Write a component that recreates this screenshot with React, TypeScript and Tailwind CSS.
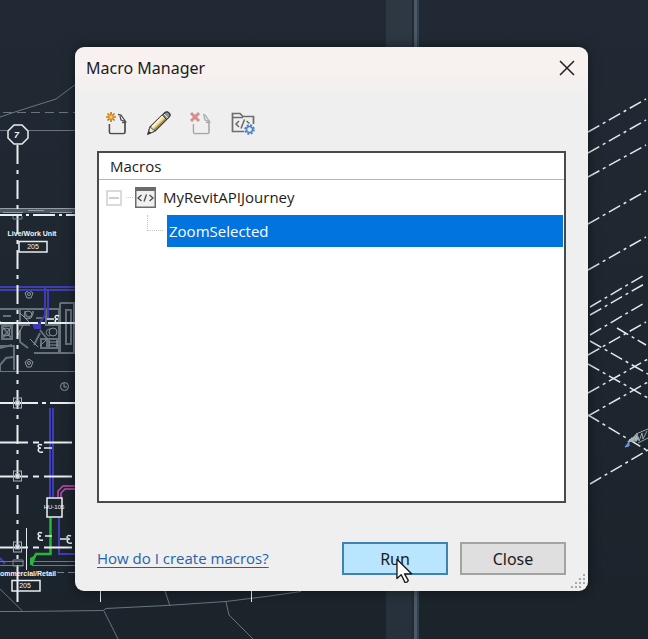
import type { ReactNode } from 'react';

const CAD_FONT = "[font-family:'Liberation_Sans',Arial,sans-serif]";

function GridMark({ y }: { y: number }) {
  return (
    <g stroke="#a9b3bb" fill="none">
      <rect x="13.5" y={y - 5} width="8" height="10" />
      <rect x="15.5" y={y - 2} width="4" height="4" fill="#dfe5e9" />
    </g>
  );
}

function Pentagon({ x, y }: { x: number; y: number }) {
  return (
    <g fill="none" stroke="#8b969f">
      <path d={`M${x} ${y - 4}l4 3-2 5h-4l-2-5z`} />
      <circle cx={x} cy={y} r="1.5" />
    </g>
  );
}

const isoLines: [number, number, number, number][] = [
  [588, 132, 646, 99],
  [588, 153, 646, 120],
  [588, 177, 646, 145],
  [588, 224, 646, 191],
  [588, 270, 646, 237],
  [590, 307, 646, 274],
  [590, 315, 646, 283],
  [590, 335, 646, 302],
  [588, 355, 646, 322],
  [588, 393, 648, 359],
  [588, 416, 648, 382],
  [590, 484, 648, 450],
  [617, 328, 646, 345],
  [590, 341, 648, 374],
  [588, 364, 648, 398],
  [588, 415, 648, 451],
];

function DrawingCanvas() {
  return (
    <svg className="absolute left-0 top-0" width="648" height="639" viewBox="0 0 648 639" aria-hidden="true">
      <rect x="386" y="0" width="26" height="300" fill="#2e3843" />
      <rect x="386" y="300" width="26" height="339" fill="#27313b" />
      <rect x="412" y="0" width="2" height="639" fill="#202b37" />
      <rect x="414" y="0" width="3" height="639" fill="#4b5866" />
      <rect x="417" y="0" width="2" height="639" fill="#323f4d" />

      {/* site contours */}
      <g fill="none" stroke="#69747d">
        <path d="M0 117l18-6 38-12 20-15" />
        <path d="M3 112.500h72" strokeDasharray="9 5" />
        <path d="M0 130.500h75" />
        <path d="M0 371.500h75" />
        <path d="M0 589l22 21.500M0 611.500h22l81-1 3-2 60-3 60-4 40-5 35-5" />
        <path d="M104 611l14 28M165 591l5 15M226 602l3 13 24 24" />
      </g>

      {/* walls */}
      <rect x="0" y="208" width="75" height="5" fill="#4d5962" />
      <path d="M0 208.500h75M3 212.500h20M28 210.500h16M50 212.500h22" stroke="#929da5" fill="none" />
      <g fill="none" stroke="#66727b" strokeWidth="2">
        <path d="M0 309h60M60 303h14v50H34M66 310h5v34h-5zM0 346h14v24M0 324h14M20 309v16h10M46 309v16h13M59 309v43M20 330v12l8 6M40 330l8 10M34 345l6-12M0 348l12-3M2 326l10 13M12 326L2 339M2 326h10v13H2z" />
        <path d="M49 339h8v9h-8zM41 339h6v9h-6zM0 371v-6l6-7 7-1M60 303v50M3 316h8M25 311c0 8 8 8 8 0M36 318h8" />
      </g>
      <g fill="none" stroke="#87929a">
        <path d="M0 321.500l6 3M49 342h9M49 345h9M20 313l9 9M50 329c-5 0-5 7 0 7M30 339l8 8M40 346l8-8M23 325l-6 12" />
        <circle cx="28" cy="315" r="4" />
        <circle cx="53" cy="332" r="4" />
        <circle cx="6" cy="332" r="4" />
        <circle cx="64.500" cy="386.500" r="4" />
        <path d="M64 383v4h3" />
      </g>
      <Pentagon x={29} y={294} />
      <Pentagon x={29} y={363} />

      {/* ducts and pipes */}
      <g fill="none" stroke="#3f3db5" strokeWidth="2">
        <path d="M0 287h75M0 290h75M45 287v28l-5 8M48 290v28" />
        <path d="M50 408v89M53 408v89M59 518v36h16" />
        <path d="M0 558l5 6" />
      </g>
      <path d="M32 323h9v6h-7z" fill="#3d3bbd" />
      <path d="M58 497v-6l5-5h12M61 497v-4l4-4h10" stroke="#c04fb2" fill="none" strokeWidth="1.500" />
      <path d="M50.500 518v36H36l-5 10" stroke="#22b83b" strokeWidth="2.500" fill="none" />
      <path d="M30 558l6-3-3 10h-3z" fill="#22b83b" />
      <path d="M32 561.500h43M32 565.500h43M0 561.500h24M0 565.500h24" stroke="#6f7b84" />
      <path d="M57 572.500h18" stroke="#78838c" strokeDasharray="7 4" />

      {/* grid lines */}
      <g fill="none" stroke="#e9eef1" strokeWidth="2">
        <path d="M17.500 145v430" strokeDasharray="19 6 4 6" />
        <path d="M0 215h75" strokeDasharray="22 4 3 4" />
        <path d="M0 323h75" strokeDasharray="38 3 4 3" />
        <path d="M0 403h75" strokeDasharray="38 4 4 4" />
        <path d="M0 442.500h75M0 476.500h75M0 547.500h75" strokeDasharray="28 5 6 5" />
        <path d="M17.500 575v27" />
      </g>
      <path d="M26.500 528v42M100.500 591v11M251.500 591v11" stroke="#e4eaee" />
      <GridMark y={403} />
      <GridMark y={476} />
      <GridMark y={547} />
      <path d="M13 560h10v6H13zM13 216v3h9v-3" fill="none" stroke="#7c8790" />

      {/* grid bubble */}
      <path d="M14 125h8l6 6v7l-6 6h-8l-6-6v-7z" fill="#212a33" stroke="#e8edf0" strokeWidth="1.500" />

      {/* equipment */}
      <rect x="47" y="498" width="15" height="19" fill="#1c242c" stroke="#eef2f4" strokeWidth="1.500" />
      <g stroke="#e8edf0" fill="none" strokeWidth="1.500">
        <path d="M44 448h8M45 536h7M60 539h7M47 319h7" />
        <path d="M42 445c-5-2-5 3-1 3-4 0-4 5 2 4M42 533c-5-2-5 3-1 3-4 0-4 5 2 4M71 536c-5-2-5 3-1 3-4 0-4 5 2 4M59 316c-5-2-5 3-1 3-4 0-4 5 2 4" />
      </g>
      <g fill="none" stroke="#e8edf0" strokeWidth="1.500">
        <rect x="19" y="241.500" width="28" height="10.500" />
        <rect x="12" y="580.500" width="28" height="10.500" />
      </g>
      <g fill="#f2f5f7" textAnchor="middle" className={`${CAD_FONT} font-bold`}>
        <text x="16.500" y="138" fontSize="9" fontStyle="italic">7</text>
        <text x="32" y="236" fontSize="7">Live/Work Unit</text>
        <text x="33" y="249" fontSize="7" fontWeight="400">205</text>
        <text x="54" y="509" fontSize="6" fontWeight="400">HU-105</text>
        <text x="25" y="588" fontSize="7" fontWeight="400">205</text>
        <text x="0" y="576" fontSize="7" textAnchor="start">ommercial/Retail</text>
      </g>

      {/* isometric view */}
      <g stroke="#e3e9ec" strokeWidth="1.500" strokeDasharray="13 4 3 4">
        {isoLines.map(([x1, y1, x2, y2]) => (
          <line key={`${x1}-${y1}-${y2}`} x1={x1} y1={y1} x2={x2} y2={y2} />
        ))}
      </g>
      <path d="M627 442l5-5 3 5zM632 438l4-4 3 4-3 4z" fill="#a7b5c1" />
      <path d="M625 447l4-5v4z" fill="#568bd6" stroke="#6f9ddd" />
      <path d="M634 440l3-7 2 8 3-8 1 6 4-8M636 434l12-5M638 443l10-5" stroke="#98a3ab" fill="none" />
    </svg>
  );
}

function NewIcon() {
  return (
    <svg width="24" height="24" viewBox="0 0 24 24" fill="none">
      <path d="M4.500 13v8q0 1.500 1.500 1.500h12.500q1.500 0 1.500-1.500V11.500h-3" stroke="#4d4d4d" strokeWidth="1.700" />
      <path d="M5.500 12.500h13.500v9h-13.500z" fill="#efefef" />
      <path d="M13 3.500l3 .5 4.500 6.500-4.500-1.500-1-4" stroke="#4d4d4d" fill="#f8f8f8" strokeWidth="1.300" />
      <path d="M6 1v10M1 6h10M2.500 2.500l7 7M9.500 2.500l-7 7" stroke="#c87519" strokeWidth="1.700" />
      <circle cx="6" cy="6" r="2.200" fill="#ffd24d" stroke="#d98622" />
    </svg>
  );
}

function PencilIcon() {
  return (
    <svg width="24" height="24" viewBox="0 0 24 24" fill="none">
      <path d="M1 23l2-7L18 1.500q2-1.500 4 .5t0 4L8 20z" fill="#e9d894" stroke="#383838" strokeWidth="1.400" />
      <path d="M5 16L17 4" stroke="#fff6cf" strokeWidth="2" />
      <path d="M7 19L20 6.500" stroke="#9c8752" strokeWidth="1.500" />
      <path d="M15.500 4l4 4.500 3-3q1-2-.5-3.500t-3.500-.5z" fill="#8c9197" stroke="#333" />
      <path d="M17 3l4 4" stroke="#e6e6e6" />
      <path d="M3 16l5 4-7 3z" fill="#eeeae0" stroke="#555" />
      <path d="M1 23l1-3 2 2z" fill="#222" />
    </svg>
  );
}

function DeleteIcon() {
  return (
    <svg width="24" height="24" viewBox="0 0 24 24" fill="none">
      <path d="M4.500 13v8q0 1.500 1.500 1.500h12.500q1.500 0 1.500-1.500V11.500h-3" stroke="#a5aaa7" strokeWidth="1.600" />
      <path d="M5.500 12.500h13.500v9h-13.500z" fill="#efefef" />
      <path d="M14 3.500l2 .5 4.500 6.500-4.500-1.500-1-4" stroke="#9caea5" fill="#f0f3f1" strokeWidth="1.300" />
      <path d="M2 2l8 8M10 2l-8 8" stroke="#d38e8e" strokeWidth="3" />
    </svg>
  );
}

function FolderIcon() {
  return (
    <svg width="24" height="24" viewBox="0 0 24 24" fill="none">
      <path d="M13 20.500H1.500v-18H9l3 3h10.500V13M1.500 6.500H12" stroke="#6d6d6d" strokeWidth="1.700" />
      <path d="M8 10l-3 3 3 3M13.500 8.500l-3.500 9M15.500 10l3 2.500" stroke="#666" strokeWidth="1.500" />
      <circle cx="18.500" cy="18.500" r="4.300" stroke="#4683c8" strokeWidth="2" strokeDasharray="2 1.380" />
      <circle cx="18.500" cy="18.500" r="3" fill="#efefef" stroke="#4683c8" strokeWidth="1.400" />
    </svg>
  );
}

function MacroIcon() {
  return (
    <svg width="21" height="21" viewBox="0 0 21 21" fill="none" className="shrink-0">
      <rect x="0.750" y="0.750" width="19.500" height="19.500" fill="#f0f0f0" stroke="#6b6b6b" strokeWidth="1.500" />
      <rect width="21" height="4" fill="#6b6b6b" />
      <path d="M6.500 8L3 11l3.500 3M14.500 8l3.500 3-3.500 3M11.500 7.500l-2.500 7" stroke="#4c4c4c" strokeWidth="1.300" />
    </svg>
  );
}

function ToolButton({ label, disabled, children }: { label: string; disabled?: boolean; children: ReactNode }) {
  return (
    <button type="button" aria-label={label} disabled={disabled} className="flex size-6 items-center justify-center">
      {children}
    </button>
  );
}

function Cursor() {
  return (
    <svg className="pointer-events-none absolute left-[52px] top-3.5" width="17" height="26" viewBox="0 0 18 27" aria-hidden="true">
      <path d="M1 1v20.500l4.500-4 4 8q2.500.5 3.500-2l-4-7h7.500z" fill="#fff" stroke="#161616" strokeWidth="1.400" strokeLinejoin="round" />
    </svg>
  );
}

export default function App() {
  return (
    <main className="relative min-h-screen overflow-hidden bg-linear-to-b from-[#212a34] to-[#1b232b] pt-[47px] pr-[60px] pb-12 pl-[75px] text-base text-[#1c1c1c] [font-family:'Noto_Sans','Open_Sans',sans-serif]">
      <DrawingCanvas />
      <section
        role="dialog"
        aria-labelledby="title"
        className="relative rounded-[9px] bg-[#efefef] bg-linear-to-b from-[#f9f1f0] from-0% via-[#f7f1f0] via-5% to-[#efefef] to-9% shadow-[0_0_12px_rgba(0,0,0,0.5)]"
      >
        <header className="flex h-[42px] items-center justify-between pr-3 pl-[11px]">
          <h1 id="title" className="text-base">Macro Manager</h1>
          <button type="button" aria-label="Close window" className="flex size-[18px] items-center justify-center">
            <svg width="16" height="16" viewBox="0 0 16 16" stroke="#202020" strokeWidth="1.500">
              <path d="M1 1l14 14M15 1L1 15" />
            </svg>
          </button>
        </header>

        <div className="px-[22px] pb-4">
          <div role="toolbar" aria-label="Macro tools" className="flex gap-[18px] pt-[22px] pb-4 pl-2">
            <ToolButton label="New macro"><NewIcon /></ToolButton>
            <ToolButton label="Edit macro"><PencilIcon /></ToolButton>
            <ToolButton label="Delete macro" disabled><DeleteIcon /></ToolButton>
            <ToolButton label="Macro folder"><FolderIcon /></ToolButton>
          </div>

          <div className="h-[352px] border-2 border-[#4a4a4a] bg-white text-[15px] [font-family:'Open_Sans','Noto_Sans',sans-serif]">
            <h2 className="flex h-[27px] items-center border-b border-[#b5b5b5] pl-[11px]">Macros</h2>
            <ul role="tree" aria-label="Macros" className="pr-px">
              <li role="treeitem" aria-expanded="true">
                <div className="flex h-[35px] items-center pl-[7px]">
                  <button
                    type="button"
                    aria-label="Collapse"
                    className="flex size-4 items-center justify-center border-2 border-[#dadada]"
                  >
                    <span className="h-0.5 w-2.5 bg-[#cfcfcf]" />
                  </button>
                  <span className="mr-0.5 ml-1 w-[7px] border-t border-dotted border-[#c4c4c4]" />
                  <MacroIcon />
                  <span className="pl-[7px]">MyRevitAPIJourney</span>
                </div>
                <ul role="group">
                  <li role="treeitem" aria-selected="true" className="flex h-8 pl-12">
                    <span className="mr-1 h-4 w-4 border-b border-l border-dotted border-[#c4c4c4]" />
                    <span className="flex flex-1 items-center bg-[#0274df] pl-0.5 text-white">ZoomSelected</span>
                  </li>
                </ul>
              </li>
            </ul>
          </div>

          <footer className="flex items-center pt-[39px]">
            <a
              href="#help"
              className="mr-auto text-[15px] text-[#1f63ad] underline underline-offset-3 [font-family:'Open_Sans','Noto_Sans',sans-serif]"
            >
              How do I create macros?
            </a>
            <button type="button" className="relative mr-3 h-[33px] w-[106px] border-2 border-[#3f83b5] bg-[#bae5ff]">
              Run
              <Cursor />
            </button>
            <button type="button" className="h-[33px] w-[106px] border-2 border-[#a3a3a3] bg-[#dfdfdf]">
              Close
            </button>
          </footer>
        </div>
        <svg className="absolute right-0.5 bottom-0.5" width="16" height="16" viewBox="0 0 16 16" aria-hidden="true" fill="#a9a9a9">
          <path d="M13 1h2v2h-2zM13 5h2v2h-2zM9 5h2v2H9zM13 9h2v2h-2zM9 9h2v2H9zM5 9h2v2H5zM9 13h2v2H9zM5 13h2v2H5zM1 13h2v2H1z" />
        </svg>
      </section>
    </main>
  );
}
